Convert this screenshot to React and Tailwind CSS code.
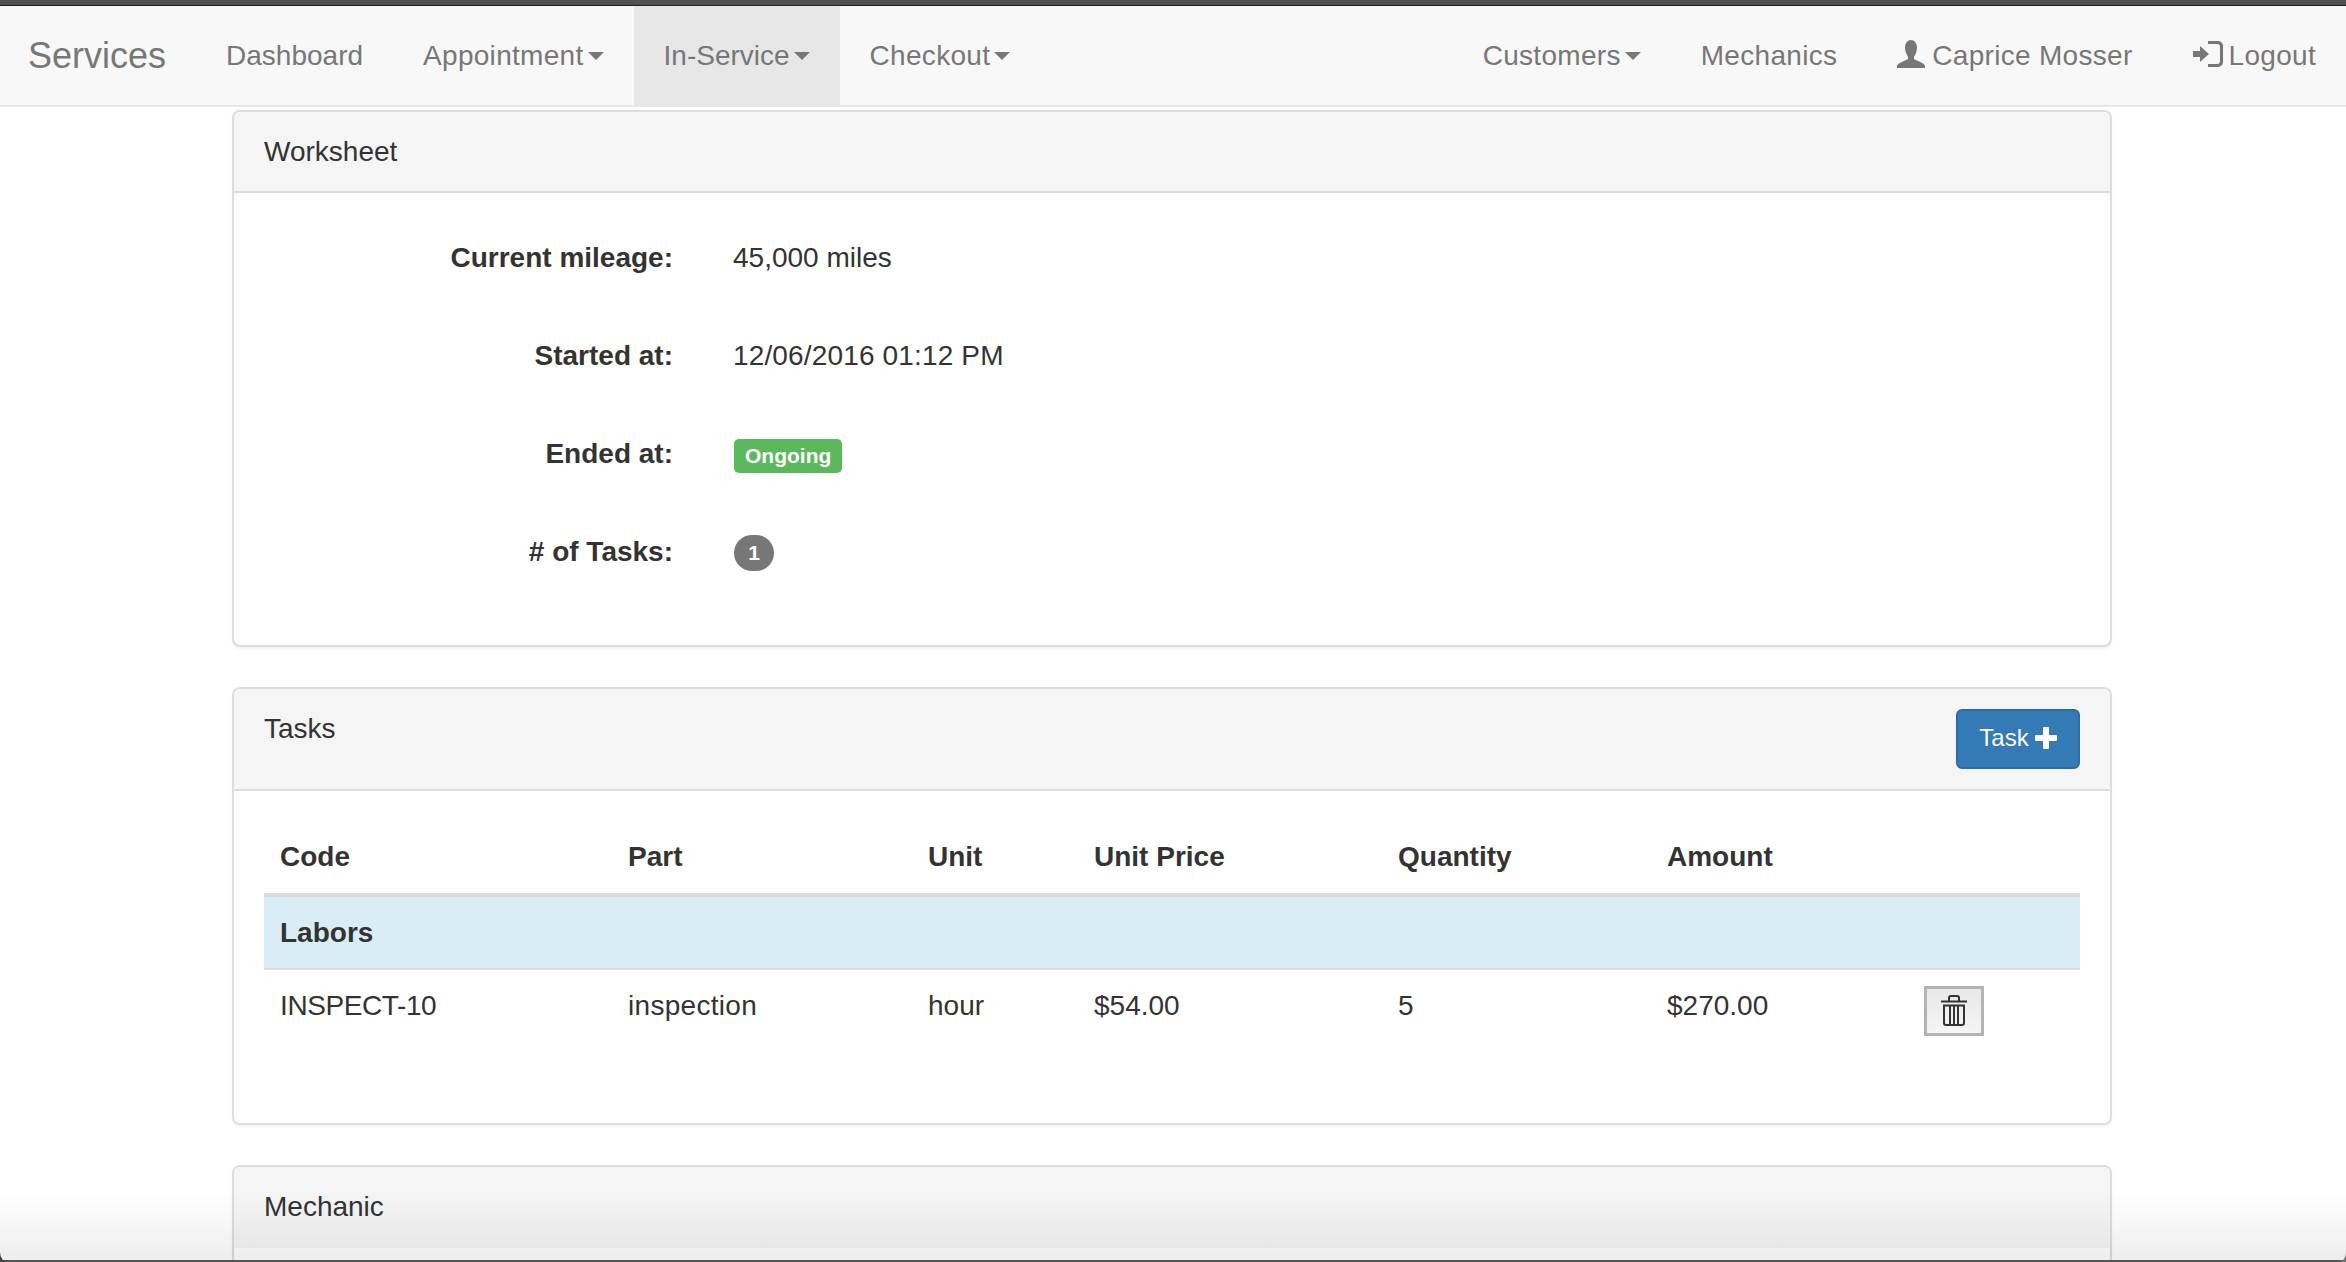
const font = { fontFamily: '"Liberation Sans", Arial, sans-serif' };

const Caret = () => (
  <span className="ml-[4px] inline-block w-0 h-0 border-x-[8px] border-x-transparent border-t-[8px] border-t-[#777] align-middle" />
);

const NavLink = ({ children, active, caret, wide = true }) => (
  <a className={`h-[99px] flex items-center px-[30px] text-[#777] whitespace-nowrap ${wide ? 'tracking-[0.3px]' : ''} ${active ? 'bg-[#e7e7e7]' : ''}`}>
    {children}
    {caret && <Caret />}
  </a>
);

const UserIcon = () => (
  <svg width="28" height="28" viewBox="0 0 28 28" className="mr-[7px] mb-[4px]" fill="#777">
    <path d="M14 0c3.500 0 6 3 6 8 0 4-2 7-3 9v2c3 2 11 4 11 7v2H0v-2c0-3 8-5 11-7v-2c-1-2-3-5-3-9 0-5 2.500-8 6-8z" />
  </svg>
);

const LoginIcon = () => (
  <svg width="30" height="26" viewBox="0 0 30 26" className="mr-[6px] mb-[3px]" fill="#777">
    <path d="M0 10h7V5l9 8-9 8v-5H0z" />
    <path d="M15 0h10a5 5 0 0 1 5 5v16a5 5 0 0 1-5 5H15v-3h9a3 3 0 0 0 3-3V6a3 3 0 0 0-3-3h-9z" />
  </svg>
);

const TrashIcon = () => (
  <svg width="26" height="32" viewBox="0 0 26 32" fill="none" stroke="#333" strokeWidth="2">
    <path d="M0 6.500h26" />
    <path d="M8 6V3a2 2 0 0 1 2-2h6a2 2 0 0 1 2 2v3" />
    <path d="M3 10.500h20V28a2 2 0 0 1-2 2H5a2 2 0 0 1-2-2z" />
    <path d="M9 11v19M13 11v19M17 11v19" />
  </svg>
);

const Panel = ({ title, action, headingClass, children }) => (
  <div className="border-2 border-[#ddd] rounded-[8px] bg-white shadow-[0_2px_3px_rgba(0,0,0,0.05)] overflow-hidden">
    <div className={`bg-[#f5f5f5] border-b-2 flex justify-between ${headingClass}`}>
      <span className="text-[#333]">{title}</span>
      {action}
    </div>
    {children}
  </div>
);

const fields = [
  ['Current mileage:', <span>45,000 miles</span>],
  ['Started at:', <span className="tracking-[0.15px]">12/06/2016 01:12 PM</span>],
  ['Ended at:', <span className="inline-block ml-[1px] bg-[#5cb85c] text-white font-bold text-[21px] leading-[21px] px-[11px] pt-[6px] pb-[7px] rounded-[5px] mt-[2px]">Ongoing</span>],
  ['# of Tasks:', <span className="flex items-center justify-center ml-[1px] w-[40px] h-[36px] rounded-full bg-[#777] text-white font-bold text-[21px] mt-[2px]">1</span>],
];

const columns = ['Code', 'Part', 'Unit', 'Unit Price', 'Quantity', 'Amount', ''];
const widths = ['w-[348px]', 'w-[300px]', 'w-[166px]', 'w-[304px]', 'w-[269px]', 'w-[257px]', 'w-[172px]'];
const row = [
  ['INSPECT-10', 'tracking-[-0.4px]'],
  ['inspection', 'tracking-[0.3px]'],
  ['hour', ''],
  ['$54.00', ''],
  ['5', ''],
  ['$270.00', ''],
];

export default function App() {
  return (
    <div className="relative h-[1262px] overflow-hidden bg-white text-[28px] leading-[40px] text-[#333]" style={font}>
      <div className="h-[6px] bg-[#515151] border-b border-[#222]" />
      <nav className="h-[101px] bg-[#f8f8f8] border-b-2 border-[#e7e7e7] flex justify-between">
        <div className="flex">
          <a className="h-[99px] flex items-center pl-[28px] pr-[30px] text-[36px] text-[#777]">Services</a>
          <NavLink wide={false}>Dashboard</NavLink>
          <NavLink caret>Appointment</NavLink>
          <NavLink caret active wide={false}>In-Service</NavLink>
          <NavLink caret>Checkout</NavLink>
        </div>
        <div className="flex">
          <NavLink caret>Customers</NavLink>
          <NavLink>Mechanics</NavLink>
          <NavLink><UserIcon />Caprice Mosser</NavLink>
          <NavLink><LoginIcon />Logout</NavLink>
        </div>
      </nav>

      <div className="w-[1880px] ml-[232px] mt-[3px] flex flex-col gap-[40px]">
        <Panel title="Worksheet" headingClass="h-[81px] border-[#ddd] px-[30px] items-center">
          <div className="h-[452px] pt-[16px] flex flex-col">
            {fields.map(([label, value]) => (
              <div key={label} className="h-[98px] flex items-center shrink-0">
                <div className="w-[439px] text-right font-bold">{label}</div>
                <div className="ml-[60px]">{value}</div>
              </div>
            ))}
          </div>
        </Panel>

        <Panel
          title="Tasks"
          headingClass="h-[102px] border-[#ddd] pl-[30px] pr-[30px] pt-[20px]"
          action={
            <button className="h-[60px] w-[124px] pb-[3px] bg-[#337ab7] border-2 border-[#2e6da4] rounded-[6px] text-white text-[24px] flex items-center justify-center gap-[6px]">
              Task
              <svg width="22" height="22" viewBox="0 0 22 22" fill="#fff">
                <path d="M8 1a1 1 0 0 1 1-1h4a1 1 0 0 1 1 1v7h7a1 1 0 0 1 1 1v4a1 1 0 0 1-1 1h-7v7a1 1 0 0 1-1 1H9a1 1 0 0 1-1-1v-7H1a1 1 0 0 1-1-1V9a1 1 0 0 1 1-1h7z" />
              </svg>
            </button>
          }
        >
          <div className="h-[332px] px-[30px] pt-[30px]">
            <table className="w-full table-fixed border-collapse">
              <thead>
                <tr className="h-[74px] border-b-[4px] border-[#ddd]">
                  {columns.map((c, i) => (
                    <th key={i} className={`${widths[i]} text-left font-bold px-[16px]`}>{c}</th>
                  ))}
                </tr>
              </thead>
              <tbody>
                <tr className="h-[74px] bg-[#d9edf7] border-b-2 border-[#ddd]">
                  <td colSpan={7} className="px-[16px] font-bold">Labors</td>
                </tr>
                <tr>
                  {row.map(([c, extra], i) => (
                    <td key={i} className={`px-[16px] pt-[16px] pb-[16px] align-top ${extra}`}>{c}</td>
                  ))}
                  <td className="px-[16px] pt-[16px] pb-[16px] align-top">
                    <button className="w-[60px] h-[50px] border-[3px] border-[#b3b3b3] bg-gradient-to-b from-[#e8e8e8] to-[#f5f5f5] flex items-center justify-center">
                      <TrashIcon />
                    </button>
                  </td>
                </tr>
              </tbody>
            </table>
          </div>
        </Panel>

        <Panel title="Mechanic" headingClass="h-[81px] border-transparent px-[30px] items-center">
          <div className="h-[60px]" />
        </Panel>
      </div>

      {/* window edge fade at the bottom of the capture */}
      <div className="absolute inset-x-0 bottom-0 h-[70px] bg-gradient-to-b from-transparent to-[rgba(0,0,0,0.07)] pointer-events-none" />
      <div className="absolute inset-x-0 bottom-0 h-[2px] bg-[#555]" />
      <svg width="10" height="10" viewBox="0 0 10 10" className="absolute left-0 bottom-0" fill="#444">
        <path d="M0 0Q0 10 10 10H0z" />
      </svg>
      <svg width="10" height="10" viewBox="0 0 10 10" className="absolute right-0 bottom-0" fill="#777">
        <path d="M10 0Q10 10 0 10H10z" />
      </svg>
    </div>
  );
}
